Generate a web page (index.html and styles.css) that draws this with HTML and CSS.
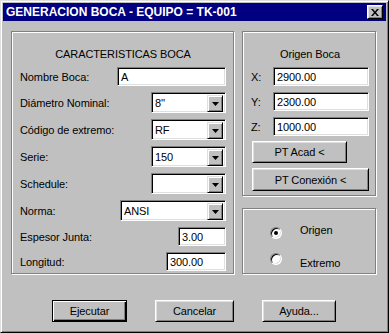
FILE: index.html
```html
<!doctype html>
<html lang="es">
<head>
	<meta charset="UTF-8" />
	<title>Generacion Boca</title>
<link rel="stylesheet" href="styles.css">
</head>
<body>
	<div class="window">
		<div class="titlebar">
			<span class="title">GENERACION BOCA - EQUIPO = TK-001</span>
			<div class="close">
				<svg width="8" height="7" viewBox="0 0 8 7"><path d="M0 0h2l2 2.5 2-2.5h2l-3 3.5 3 3.5h-2l-2-2.5-2 2.5h-2l3-3.5z"/></svg>
			</div>
		</div>
		<div class="content">
			<div class="main">
				<div class="group group-left">
					<div class="group-title">CARACTERISTICAS BOCA</div>
					<div class="row">
						<span>Nombre Boca:</span>
						<div class="field w-nombre">A</div>
					</div>
					<div class="row">
						<span>Diámetro Nominal:</span>
						<div class="combo w-combo"><span class="value">8''</span><span class="drop"><svg width="7" height="4" viewBox="0 0 7 4"><path d="M0 0h7l-3.5 4z"/></svg></span></div>
					</div>
					<div class="row">
						<span>Código de extremo:</span>
						<div class="combo w-combo"><span class="value">RF</span><span class="drop"><svg width="7" height="4" viewBox="0 0 7 4"><path d="M0 0h7l-3.5 4z"/></svg></span></div>
					</div>
					<div class="row">
						<span>Serie:</span>
						<div class="combo w-combo"><span class="value">150</span><span class="drop"><svg width="7" height="4" viewBox="0 0 7 4"><path d="M0 0h7l-3.5 4z"/></svg></span></div>
					</div>
					<div class="row">
						<span>Schedule:</span>
						<div class="combo w-combo"><span class="value"></span><span class="drop"><svg width="7" height="4" viewBox="0 0 7 4"><path d="M0 0h7l-3.5 4z"/></svg></span></div>
					</div>
					<div class="row">
						<span>Norma:</span>
						<div class="combo w-norma"><span class="value">ANSI</span><span class="drop"><svg width="7" height="4" viewBox="0 0 7 4"><path d="M0 0h7l-3.5 4z"/></svg></span></div>
					</div>
					<div class="row">
						<span>Espesor Junta:</span>
						<div class="field w-espesor">3.00</div>
					</div>
					<div class="row">
						<span>Longitud:</span>
						<div class="field w-longitud">300.00</div>
					</div>
				</div>

				<div class="side">
					<div class="group group-origin">
						<div class="group-title">Origen Boca</div>
						<div class="row">
							<span>X:</span>
							<div class="field w-coord">2900.00</div>
						</div>
						<div class="row">
							<span>Y:</span>
							<div class="field w-coord">2300.00</div>
						</div>
						<div class="row">
							<span>Z:</span>
							<div class="field w-coord">1000.00</div>
						</div>
						<div class="btn btn-acad">PT Acad &lt;</div>
						<div class="btn btn-conexion">PT Conexión &lt;</div>
					</div>
					<div class="group group-radio">
						<div class="radio-row first">
							<span class="radio checked"></span>
							<span class="radio-label">Origen</span>
						</div>
						<div class="radio-row second">
							<span class="radio"></span>
							<span class="radio-label">Extremo</span>
						</div>
					</div>
				</div>
			</div>

			<div class="actions">
				<div class="btn btn-default w-ejecutar">Ejecutar</div>
				<div class="btn w-cancelar">Cancelar</div>
				<div class="btn w-ayuda">Ayuda...</div>
			</div>
		</div>
	</div>
</body>
</html>
```

FILE: styles.css
```css
*{
	margin: 0;
	padding: 0;
	box-sizing: border-box;
}
body{
	font-family: "Liberation Sans", Arial, sans-serif;
	font-size: 11px;
	letter-spacing: -0.1px;
	color: #000;
	background: #c0c0c0;
}
.window{
	width: 389px;
	height: 333px;
	background: #c0c0c0;
	border: 1px solid;
	border-color: #dfdfdf #000 #000 #dfdfdf;
	box-shadow: inset 1px 1px #fff, inset -1px -1px #808080;
	padding: 2px;
}

/* title bar */
.titlebar{
	height: 18px;
	background: #000080;
	color: #fff;
	display: flex;
	align-items: center;
	justify-content: space-between;
	padding: 0 3px 0 3px;
}
.title{
	font-weight: bold;
	font-size: 12px;
	letter-spacing: 0;
}
.close{
	width: 16px;
	height: 14px;
	background: #c0c0c0;
	border: 1px solid;
	border-color: #fff #000 #000 #fff;
	box-shadow: inset 1px 1px #dfdfdf, inset -1px -1px #808080;
	display: flex;
	align-items: center;
	justify-content: center;
}

.content{
	padding: 10px 0 0 8px;
}
.main{
	display: flex;
	gap: 8px;
	align-items: flex-start;
}

/* etched group boxes */
.group{
	border: 1px solid #808080;
	box-shadow: 1px 1px #fff, inset 1px 1px #fff;
}
.group-left{
	width: 223px;
	height: 243px;
	padding: 15px 7px 0 8px;
}
.group-title{
	text-align: center;
	line-height: 14px;
	height: 14px;
}
.row{
	display: flex;
	justify-content: space-between;
	align-items: center;
	margin-top: 6px;
}

/* sunken fields */
.field, .combo{
	background: #fff;
	border: 1px solid;
	border-color: #808080 #fff #fff #808080;
	box-shadow: inset 1px 1px #000, inset -1px -1px #dfdfdf;
}
.field{
	height: 19px;
	line-height: 15px;
	padding: 2px 3px;
	white-space: nowrap;
}
.combo{
	height: 21px;
	display: flex;
	padding: 2px;
}
.combo .value{
	flex: 1;
	line-height: 17px;
	padding-left: 1px;
}
.drop{
	width: 16px;
	height: 17px;
	background: #c0c0c0;
	border: 1px solid;
	border-color: #dfdfdf #000 #000 #dfdfdf;
	box-shadow: inset 1px 1px #fff, inset -1px -1px #808080;
	display: flex;
	align-items: center;
	justify-content: center;
}
.w-nombre{ width: 109px; }
.w-combo{ width: 75px; }
.w-norma{ width: 106px; }
.w-espesor{ width: 48px; }
.w-longitud{ width: 60px; }
.w-coord{ width: 96px; }

/* right column */
.side{
	width: 134px;
	display: flex;
	flex-direction: column;
	gap: 12px;
}
.group-origin{
	height: 165px;
	padding: 15px 6px 0 8px;
}

/* raised buttons */
.btn{
	background: #c0c0c0;
	border: 1px solid;
	border-color: #fff #000 #000 #fff;
	box-shadow: inset 1px 1px #dfdfdf, inset -1px -1px #808080;
	display: flex;
	align-items: center;
	justify-content: center;
	height: 22px;
}
.btn-acad{
	width: 95px;
	margin: 5px 0 0 1px;
}
.btn-conexion{
	width: 117px;
	height: 23px;
	margin: 5px 0 0 1px;
}

.group-radio{
	height: 66px;
	padding: 15px 0 0 27px;
}
.radio-row{
	display: flex;
	align-items: flex-start;
	gap: 18px;
}
.radio-row.second{
	margin-top: 14px;
}
.radio-row.first .radio{
	margin-top: 3px;
}
.radio-row.second .radio-label{
	margin-top: 4px;
}
.radio-label{
	line-height: 13px;
}
.radio{
	width: 12px;
	height: 12px;
	border-radius: 50%;
	background: #fff;
	border: 1px solid;
	border-color: #808080 #fff #fff #808080;
	box-shadow: inset 1px 1px #000, inset -1px -1px #dfdfdf;
	display: flex;
	align-items: center;
	justify-content: center;
}
.radio.checked::after{
	content: "";
	width: 4px;
	height: 4px;
	border-radius: 50%;
	background: #000;
}

/* bottom buttons */
.actions{
	display: flex;
	gap: 28px;
	margin-top: 26px;
	padding-left: 41px;
}
.btn-default{
	border-color: #000;
	box-shadow: inset 1px 1px #fff, inset -1px -1px #000, inset -2px -2px #808080;
}
.w-ejecutar{ width: 75px; }
.w-cancelar{ width: 79px; }
.w-ayuda{ width: 74px; }
```
